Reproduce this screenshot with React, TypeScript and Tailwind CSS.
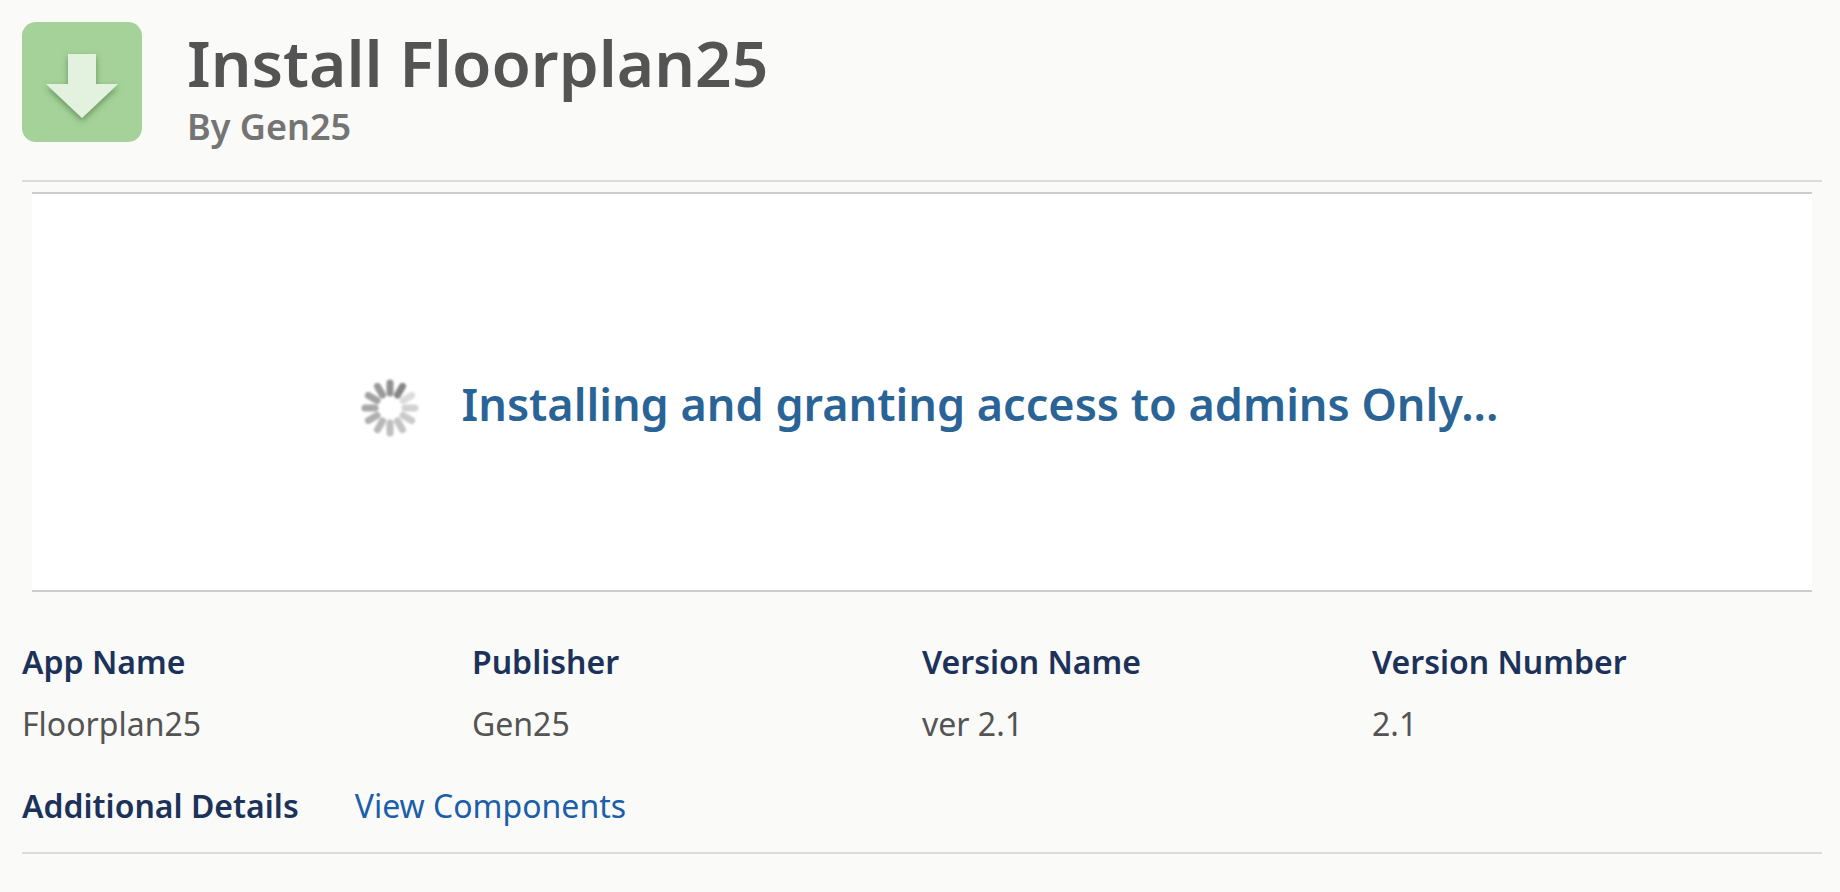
const details = [
  { label: "App Name", value: "Floorplan25" },
  { label: "Publisher", value: "Gen25" },
  { label: "Version Name", value: "ver 2.1" },
  { label: "Version Number", value: "2.1" },
];

// clockwise, starting at twelve o'clock
const spokes = [
  "#929292",
  "#868686",
  "#dcdcdc",
  "#d2d2d2",
  "#cacaca",
  "#c4c4c4",
  "#bebebe",
  "#b8b8b8",
  "#b0b0b0",
  "#a8a8a8",
  "#a2a2a2",
  "#9a9a9a",
];

function InstallIcon() {
  return (
    <svg viewBox="0 0 120 120" className="size-30 shrink-0" aria-hidden="true">
      <defs>
        <filter id="arrow-shadow" x="-20%" y="-20%" width="140%" height="140%">
          <feDropShadow dx="0" dy="3" stdDeviation="3" floodColor="#2f5f2a" floodOpacity="0.55" />
        </filter>
      </defs>
      <rect width="120" height="120" rx="14" fill="#a5d299" />
      <path
        d="M46 32H74V62H96L60 96L24 62H46Z"
        fill="#e3f2df"
        filter="url(#arrow-shadow)"
      />
    </svg>
  );
}

function Spinner() {
  return (
    <svg viewBox="-32 -32 64 64" className="mt-2 size-16 shrink-0" aria-hidden="true">
      <g className="blur-[1px]">
        {spokes.map((color, i) => (
          <line
            key={i}
            y1={-25}
            y2={-15}
            stroke={color}
            strokeWidth={7}
            strokeLinecap="round"
            transform={`rotate(${i * 30})`}
          />
        ))}
      </g>
    </svg>
  );
}

export default function App() {
  return (
    <main className="min-h-screen bg-[#fafaf9] px-[22px] pt-[22px] pr-[18px] font-['Noto_Sans',sans-serif] text-[#545454]">
      <header className="flex gap-[45px] border-b-2 border-[#dddbda] pb-[30px]">
        <InstallIcon />
        <div>
          <h1 className="text-[64px] leading-[82px] font-semibold">Install Floorplan25</h1>
          <p className="text-4xl leading-[46px] font-semibold text-[#747474]">By Gen25</p>
        </div>
      </header>

      <section
        role="status"
        className="mx-[10px] mt-[10px] flex h-[400px] items-center justify-center gap-10 border-y-2 border-[#cccccc] bg-white pt-6 pl-3"
      >
        <Spinner />
        <h2 className="text-[45px] leading-[64px] font-semibold text-[#2a6496]">
          Installing and granting access to admins Only...
        </h2>
      </section>

      <section className="border-b-2 border-[#dddbda] pt-[47px] pb-[23px] text-[32px]">
        <dl className="grid grid-cols-4">
          {details.map(({ label, value }) => (
            <div key={label}>
              <dt className="leading-[46px] font-semibold text-[#1c3259]">{label}</dt>
              <dd className="mt-4 leading-[46px]">{value}</dd>
            </div>
          ))}
        </dl>
        <div className="mt-9 flex gap-14 leading-[46px]">
          <h3 className="font-semibold text-[#1c3259]">Additional Details</h3>
          <a href="#components" className="text-[#1b5fab]">
            View Components
          </a>
        </div>
      </section>
    </main>
  );
}
